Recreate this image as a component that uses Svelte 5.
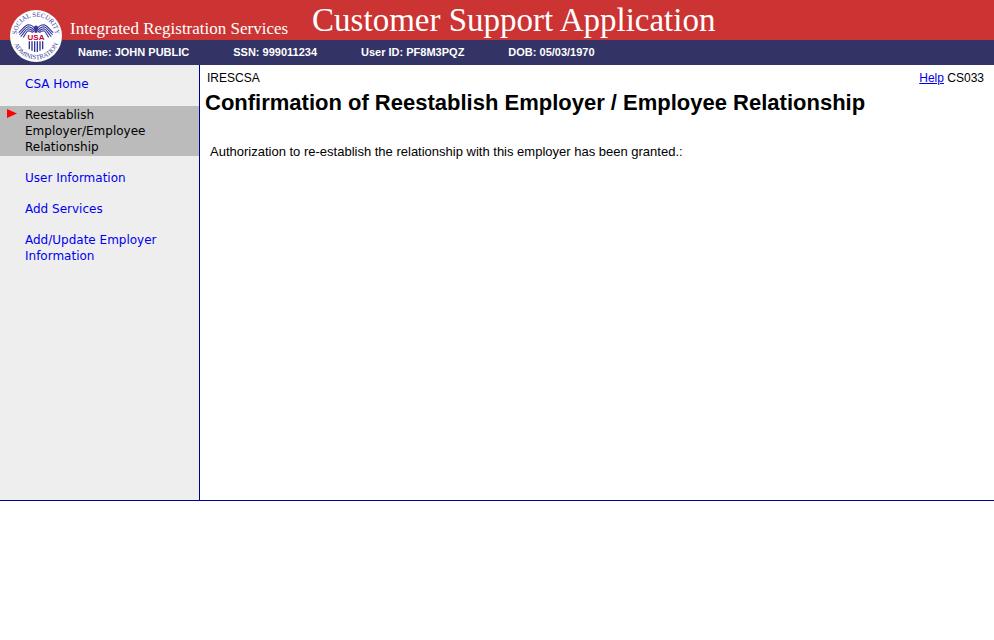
<script>
    const userInfo = [
        { label: 'Name', value: 'JOHN PUBLIC' },
        { label: 'SSN', value: '999011234' },
        { label: 'User ID', value: 'PF8M3PQZ' },
        { label: 'DOB', value: '05/03/1970' }
    ];

    const menu = [
        { text: 'CSA Home' },
        { text: 'Reestablish Employer/Employee Relationship', current: true },
        { text: 'User Information' },
        { text: 'Add Services' },
        { text: 'Add/Update Employer Information' }
    ];

    // shield stripes: [x, bottom]
    const stripes = [[28, 59], [32, 61], [36, 63], [40, 63], [44, 61], [48, 59]];
</script>

<header>
    <svg class="seal" viewBox="0 0 78 78" aria-hidden="true">
        <defs>
            <path id="arc-top" d="M10 39 A29 29 0 0 1 68 39" />
            <path id="arc-bottom" d="M4 39 A35 35 0 0 0 74 39" />
        </defs>
        <circle cx="39" cy="39" r="39" fill="#fff" />
        <text class="ring"><textPath href="#arc-top" startOffset="50%">SOCIAL SECURITY</textPath></text>
        <text class="ring"><textPath href="#arc-bottom" startOffset="50%">ADMINISTRATION</textPath></text>
        <g fill="none" stroke="#333399" stroke-width="1.6">
            <path d="M38 29 C35 24 32 22 27 22 C22 23 19 29 13 34" />
            <path d="M37 31 C33 26 30 25 27 25 C22 26 20 32 14 37" />
            <path d="M36 33 C32 29 29 28 27 28 C23 29 21 35 16 40" />
            <path d="M34 34 C31 31 29 31 27 31 C24 33 23 37 20 41" />
            <path d="M40 29 C43 24 46 22 51 22 C56 23 59 29 65 34" />
            <path d="M41 31 C45 26 48 25 51 25 C56 26 58 32 64 37" />
            <path d="M42 33 C46 29 49 28 51 28 C55 29 57 35 62 40" />
            <path d="M44 34 C47 31 49 31 51 31 C54 33 55 37 58 41" />
        </g>
        <path d="M36 25 L39 23 L42 25 L41 34 H37 Z" fill="#333399" />
        <rect x="26" y="35" width="26" height="11" fill="#fff" />
        <text class="usa" x="39" y="45">USA</text>
        {#each stripes as [x, bottom]}
            <path d="M{x} 47 h2 V{bottom} h-2 z" fill="#333399" />
        {/each}
    </svg>
    <div class="banner">
        <span class="service">Integrated Registration Services</span>
        <span class="app-title">Customer Support Application</span>
    </div>
    <div class="user-bar">
        {#each userInfo as item}
            <span>{item.label}: {item.value}</span>
        {/each}
    </div>
</header>

<div class="page">
    <nav>
        <ul>
            {#each menu as item}
                <li class:current={item.current}>
                    {#if item.current}
                        <svg class="arrow" viewBox="0 0 10 9" aria-hidden="true">
                            <path d="M0 0 L10 4.5 L0 9 Z" fill="#ff0000" />
                        </svg>
                        <span>{item.text}</span>
                    {:else}
                        <a href="#top">{item.text}</a>
                    {/if}
                </li>
            {/each}
        </ul>
    </nav>
    <main>
        <div class="top-line">
            <span>IRESCSA</span>
            <span><a href="#help">Help</a> CS033</span>
        </div>
        <h1>Confirmation of Reestablish Employer / Employee Relationship</h1>
        <p>Authorization to re-establish the relationship with this employer has been granted.:</p>
    </main>
</div>

<style>
    :global(body) {
        margin: 0;
        background: #fff;
        color: #000;
        font-family: Arial, "Liberation Sans", sans-serif;
    }

    header {
        position: relative;
        color: #fff;
    }

    .seal {
        position: absolute;
        left: 10px;
        top: 10px;
        width: 52px;
        height: 52px;
    }

    .ring {
        font-family: "Liberation Serif", serif;
        font-size: 10px;
        fill: #333399;
        text-anchor: middle;
    }

    .usa {
        font-family: "Liberation Sans", sans-serif;
        font-size: 12px;
        font-weight: bold;
        fill: #cc0033;
        text-anchor: middle;
    }

    .banner {
        display: flex;
        align-items: flex-end;
        gap: 24px;
        height: 40px;
        padding-left: 70px;
        background: #cc3333;
        font-family: Georgia, "Liberation Serif", serif;
        white-space: nowrap;
    }

    .service {
        font-size: 17px;
        line-height: 22px;
    }

    .app-title {
        font-size: 33px;
        line-height: 40px;
    }

    .user-bar {
        display: flex;
        gap: 44px;
        padding-left: 78px;
        background: #333366;
        font-size: 11px;
        font-weight: bold;
        line-height: 25px;
        white-space: nowrap;
    }

    .page {
        display: flex;
        min-height: 68vh;
        border-bottom: 1px solid #000099;
    }

    nav {
        flex: 0 0 199px;
        background: #eeeeee;
        border-right: 1px solid #000099;
        font-family: Verdana, "DejaVu Sans", sans-serif;
        font-size: 12px;
        line-height: 16px;
    }

    ul {
        display: flex;
        flex-direction: column;
        gap: 13px;
        margin: 0;
        padding: 10px 0;
        list-style: none;
    }

    li {
        position: relative;
        padding: 1px 30px 1px 25px;
    }

    .current {
        background: #bbbbbb;
    }

    .arrow {
        position: absolute;
        left: 7px;
        top: 3px;
        width: 10px;
        height: 9px;
    }

    nav a {
        color: #0000ee;
        text-decoration: none;
    }

    main {
        flex: 1;
        padding: 5px;
    }

    .top-line {
        display: flex;
        justify-content: space-between;
        padding: 0 5px 0 2px;
        font-size: 12px;
        line-height: 16px;
    }

    .top-line a {
        color: #0000ee;
    }

    h1 {
        margin: 4px 0 28px;
        font-size: 22px;
        line-height: 26px;
    }

    p {
        margin: 0;
        padding: 0 5px;
        font-size: 13px;
        line-height: 16px;
    }
</style>
